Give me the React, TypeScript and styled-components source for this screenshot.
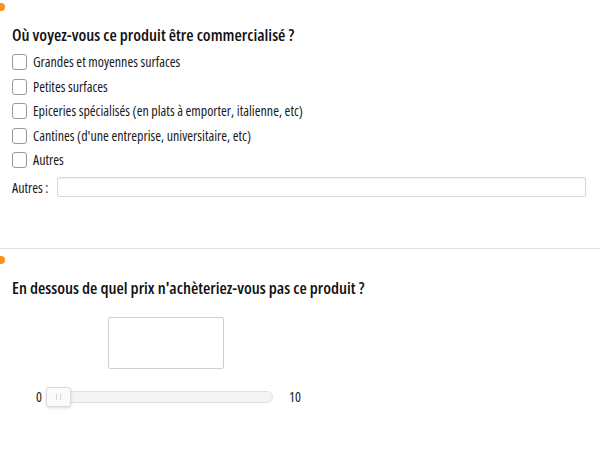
import React from 'react';
import styled, { createGlobalStyle } from 'styled-components';

const GlobalStyle = createGlobalStyle`
  html, body {
    margin: 0;
    padding: 0;
    background: #ffffff;
  }
  body {
    font-family: 'Open Sans', 'Liberation Sans', sans-serif;
    font-stretch: 75%;
    color: #111111;
    overflow: hidden;
  }
`;

const Page = styled.div`
  width: 600px;
  height: 450px;
  overflow: hidden;
`;

const Question = styled.section<{ $last?: boolean }>`
  position: relative;
  padding: ${p => (p.$last ? '26px 12px 0' : '22px 12px 51px')};
  border-bottom: ${p => (p.$last ? 'none' : '1px solid #e3e3e3')};
`;

const Dot = styled.span<{ $top: number }>`
  position: absolute;
  left: -3px;
  top: ${p => p.$top}px;
  width: 8px;
  height: 8px;
  border-radius: 50%;
  background: #f7931e;
`;

const Title = styled.h2<{ $gap: number }>`
  margin: 0 0 ${p => p.$gap}px;
  font-size: 16.8px;
  font-weight: 600;
  line-height: 26px;
  color: #111111;
`;

const Options = styled.div`
  display: flex;
  flex-direction: column;
  gap: 4.5px;
`;

const Option = styled.label`
  display: flex;
  align-items: center;
  gap: 6px;
  font-size: 14px;
  line-height: 20px;
  height: 20px;
  color: #1a1a1a;
`;

const Box = styled.span`
  width: 13px;
  height: 14px;
  border: 1px solid #999999;
  border-radius: 3px;
  background: #fff;
`;

const OtherRow = styled.div`
  display: flex;
  align-items: center;
  gap: 9px;
  margin-top: 7px;
  font-size: 14px;
  color: #1a1a1a;
`;

const TextInput = styled.div`
  flex: 1;
  height: 18px;
  border: 1px solid #d8d8d8;
  border-radius: 2px;
  box-shadow: inset 0 1px 1px rgba(0, 0, 0, 0.06);
  margin-right: 2px;
`;

const PriceBox = styled.div`
  margin-left: 96px;
  width: 114px;
  height: 50px;
  border: 1px solid #cfcfcf;
  border-radius: 2px;
`;

const SliderRow = styled.div`
  display: flex;
  align-items: center;
  gap: 4px;
  margin: 18px 0 0 24px;
  font-size: 14px;
  color: #222;
`;

const Track = styled.div`
  position: relative;
  width: 225px;
  height: 10px;
  margin-right: 12px;
  border: 1px solid #e0e0e0;
  border-radius: 6px;
  background: #f4f4f4;
`;

const Thumb = styled.div`
  position: absolute;
  left: -1px;
  top: -5px;
  width: 23px;
  height: 18px;
  border: 1px solid #dcdcdc;
  border-radius: 3px;
  background: #fafafa;
  box-shadow: 0 1px 3px rgba(0, 0, 0, 0.15);
  display: flex;
  align-items: center;
  justify-content: center;
  &::after {
    content: '';
    width: 3px;
    height: 6px;
    border-left: 1px solid #d4d4d4;
    border-right: 1px solid #d4d4d4;
  }
`;

const options = [
  'Grandes et moyennes surfaces',
  'Petites surfaces',
  'Epiceries spécialisés (en plats à emporter, italienne, etc)',
  "Cantines (d'une entreprise, universitaire, etc)",
  'Autres',
];

export default function App() {
  return (
    <Page>
      <GlobalStyle />
      <Question>
        <Dot $top={3} />
        <Title $gap={4}>Où voyez-vous ce produit être commercialisé ?</Title>
        <Options>
          {options.map(o => (
            <Option key={o}>
              <Box />
              {o}
            </Option>
          ))}
        </Options>
        <OtherRow>
          Autres :
          <TextInput />
        </OtherRow>
      </Question>
      <Question $last>
        <Dot $top={7} />
        <Title $gap={16}>En dessous de quel prix n'achèteriez-vous pas ce produit ?</Title>
        <PriceBox />
        <SliderRow>
          0
          <Track>
            <Thumb />
          </Track>
          10
        </SliderRow>
      </Question>
    </Page>
  );
}
